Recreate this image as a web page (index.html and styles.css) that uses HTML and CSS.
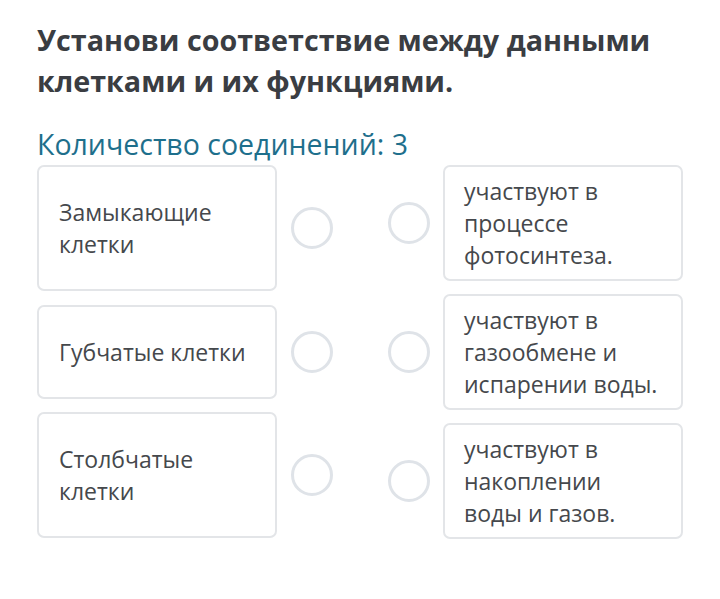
FILE: index.html
```html
<!DOCTYPE html>
<html lang="ru">
<head>
<meta charset="utf-8">
<link rel="stylesheet" href="styles.css">
</head>
<body>
<main class="task">
  <h1 class="title">Установи соответствие между данными клетками и их функциями.</h1>
  <p class="count">Количество соединений: 3</p>
  <div class="match">
    <div class="col col-left">
      <div class="row">
        <div class="card card-left">Замыкающие клетки</div>
        <span class="dot"></span>
      </div>
      <div class="row">
        <div class="card card-left">Губчатые клетки</div>
        <span class="dot"></span>
      </div>
      <div class="row">
        <div class="card card-left">Столбчатые клетки</div>
        <span class="dot"></span>
      </div>
    </div>
    <div class="col col-right">
      <div class="row">
        <span class="dot"></span>
        <div class="card card-right">участвуют в процессе фотосинтеза.</div>
      </div>
      <div class="row">
        <span class="dot"></span>
        <div class="card card-right">участвуют в газообмене и испарении воды.</div>
      </div>
      <div class="row">
        <span class="dot"></span>
        <div class="card card-right">участвуют в накоплении воды и газов.</div>
      </div>
    </div>
  </div>
</main>
</body>
</html>
```

FILE: styles.css
```css
html, body {
  margin: 0;
  padding: 0;
  background: #ffffff;
}

body {
  font-family: "Open Sans", "Noto Sans", sans-serif;
  color: #45484c;
}

.task {
  padding: 19px 37px 0 37px;
}

.title {
  margin: 0;
  font-size: 28.7px;
  line-height: 41px;
  font-weight: 700;
  color: #3a3d42;
  letter-spacing: 0;
}

.count {
  margin: 25px 0 0 0;
  font-size: 28.5px;
  line-height: 36px;
  font-weight: 400;
  color: #1e6f8c;
}

.match {
  display: flex;
  gap: 55px;
  margin-top: 3px;
}

.col {
  display: flex;
  flex-direction: column;
  gap: 13.5px;
}

.col-right {
  gap: 13px;
}

.row {
  display: flex;
  align-items: center;
  gap: 14px;
}

.col-right .row {
  gap: 13px;
}

.card {
  box-sizing: border-box;
  width: 240px;
  border: 2px solid #e3e5e8;
  border-radius: 7px;
  font-size: 23px;
  line-height: 32px;
  color: #45484c;
}

.card-left {
  padding: 29px 20px;
}

.card-right {
  padding: 8px 19px;
}

.dot {
  box-sizing: border-box;
  width: 42px;
  height: 42px;
  border: 3px solid #dfe3e8;
  border-radius: 50%;
  flex: none;
}
```
